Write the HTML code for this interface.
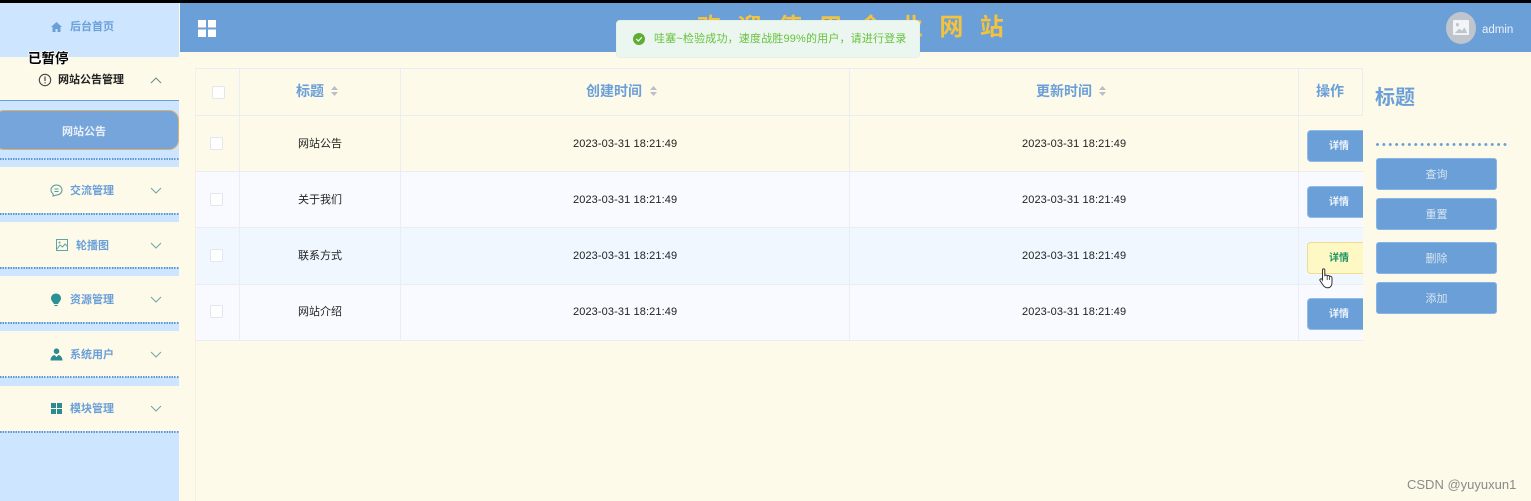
<!DOCTYPE html>
<html lang="zh-CN">
<head>
<meta charset="utf-8">
<title>网站公告</title>
<style>
html,body{margin:0;padding:0;width:1531px;height:501px;overflow:hidden;background:#fefaea;}
body{position:relative;font-family:"Liberation Sans","Noto Sans CJK SC",sans-serif;filter:blur(.3px);}
.a{position:absolute;}
.t{position:absolute;white-space:nowrap;line-height:1;}
.bar{position:absolute;left:0;width:179px;background:#fefaea;}
.dots{position:absolute;left:0;width:179px;height:2px;background:repeating-linear-gradient(90deg,#5f97d4 0,#5f97d4 1.500px,transparent 1.500px,transparent 2.600px);}
.mt{position:absolute;font-size:11px;font-weight:bold;color:#6a9fd8;white-space:nowrap;line-height:1;}
.ch{position:absolute;left:150px;width:12px;height:8px;}
.row{position:absolute;left:196px;width:1167px;border-bottom:1px solid #e9eef5;box-sizing:border-box;}
.v{position:absolute;width:1px;background:#e9eef5;}
.cb{position:absolute;width:11px;height:11px;background:#fff;border:1px solid #e3e6ee;border-radius:2px;}
.cell{position:absolute;font-size:11px;color:#222;white-space:nowrap;line-height:1;text-align:center;}
.d{letter-spacing:.11px;}
.th{position:absolute;font-size:14px;font-weight:bold;color:#6a9fd8;white-space:nowrap;line-height:1;}
.sort{position:absolute;width:7px;height:10px;}
.dbtn{position:absolute;left:1307px;width:56px;height:32px;background:#6a9fd8;border:1px solid #8fbbe8;border-right:0;border-radius:4px 0 0 4px;box-sizing:border-box;color:#eef4fb;font-size:10px;font-weight:bold;line-height:32px;text-indent:21px;}
.sbtn{position:absolute;left:1376px;width:121px;height:32px;background:#6a9fd8;border:1px solid #86b4e6;border-radius:3px;box-sizing:border-box;color:#d9e6ee;font-size:11px;line-height:32px;text-align:center;}
</style>
</head>
<body>
<div class="a" style="left:0;top:0;width:1531px;height:3px;background:#000;z-index:9"></div>

<!-- sidebar -->
<div class="a" style="left:0;top:3px;width:179px;height:498px;background:#cde5ff"></div>
<svg class="a" style="left:51px;top:22px" width="11" height="10" viewBox="0 0 11 10"><path d="M5.500 0L11 5H9.500V10H6.500V7H4.500V10H1.500V5H0Z" fill="#6a9fd8"/></svg>
<div class="mt" style="left:70px;top:22px">后台首页</div>

<div class="a" style="left:0;top:57px;width:179px;height:44px;background:#fefaea;border-bottom:1px solid #6a9fd8;box-sizing:border-box"></div>
<svg class="a" style="left:38px;top:73px" width="14" height="14" viewBox="0 0 14 14"><circle cx="7" cy="7" r="5.700" fill="none" stroke="#444" stroke-width="1.100"/><path d="M7 3.500V8M7 9.300V10.500" stroke="#444" stroke-width="1.200"/></svg>
<div class="mt" style="left:58px;top:75px;color:#222">网站公告管理</div>
<svg class="ch" style="top:76px" viewBox="0 0 12 8"><path d="M1 7L6 2L11 7" fill="none" stroke="#6b8a8a" stroke-width="1"/></svg>

<div class="a" style="left:-6px;top:110px;width:185px;height:40px;background:#76a5db;border:1px solid #dcaf6c;border-radius:10px;box-sizing:border-box"></div>
<div class="mt" style="left:62px;top:127px;color:#e8f0fa">网站公告</div>
<div class="dots" style="top:158px"></div>

<div class="bar" style="top:167px;height:46px"></div>
<div class="dots" style="top:213px"></div>
<svg class="a" style="left:50px;top:184px" width="13" height="13" viewBox="0 0 13 13"><path d="M6.500 1C9.700 1 12 3.200 12 6C12 8.800 9.700 11 6.500 11L3 12L3.300 10C1.800 9 1 7.600 1 6C1 3.200 3.300 1 6.500 1Z" fill="none" stroke="#4f9c9c" stroke-width="1"/><path d="M4.500 5H8.500M4.500 7.500H8.500" stroke="#4f9c9c" stroke-width="1"/></svg>
<div class="mt" style="left:70px;top:186px">交流管理</div>
<svg class="ch" style="top:187px" viewBox="0 0 12 8"><path d="M1 1L6 6L11 1" fill="none" stroke="#6fa5a5" stroke-width="1"/></svg>

<div class="bar" style="top:222px;height:45px"></div>
<div class="dots" style="top:267px"></div>
<svg class="a" style="left:56px;top:239px" width="12" height="12" viewBox="0 0 12 12"><rect x=".5" y=".5" width="11" height="11" fill="none" stroke="#5fa5a5"/><path d="M1 10L4 6L6.500 8L9 5L11 7" fill="none" stroke="#5fa5a5"/><circle cx="3.500" cy="3.500" r="1" fill="#5fa5a5"/></svg>
<div class="mt" style="left:76px;top:241px">轮播图</div>
<svg class="ch" style="top:242px" viewBox="0 0 12 8"><path d="M1 1L6 6L11 1" fill="none" stroke="#6fa5a5" stroke-width="1"/></svg>

<div class="bar" style="top:276px;height:46px"></div>
<div class="dots" style="top:322px"></div>
<svg class="a" style="left:50px;top:293px" width="12" height="14" viewBox="0 0 12 14"><path d="M6 0.500C9 0.500 11 2.700 11 5.200C11 7.700 9 9 8 11H4C3 9 1 7.700 1 5.200C1 2.700 3 0.500 6 0.500Z" fill="#2c9196"/><path d="M4.500 12.500H7.500" stroke="#2c9196" stroke-width="1.200"/></svg>
<div class="mt" style="left:70px;top:295px">资源管理</div>
<svg class="ch" style="top:296px" viewBox="0 0 12 8"><path d="M1 1L6 6L11 1" fill="none" stroke="#6fa5a5" stroke-width="1"/></svg>

<div class="bar" style="top:331px;height:46px"></div>
<div class="dots" style="top:376px"></div>
<svg class="a" style="left:50px;top:348px" width="13" height="13" viewBox="0 0 13 13"><circle cx="6.500" cy="3.200" r="2.800" fill="#2c8a92"/><path d="M0.500 12.500C0.500 9 3 7.200 4.500 7L6.500 9L8.500 7C10 7.200 12.500 9 12.500 12.500Z" fill="#2c8a92"/></svg>
<div class="mt" style="left:70px;top:350px">系统用户</div>
<svg class="ch" style="top:351px" viewBox="0 0 12 8"><path d="M1 1L6 6L11 1" fill="none" stroke="#6fa5a5" stroke-width="1"/></svg>

<div class="bar" style="top:386px;height:45px"></div>
<div class="dots" style="top:431px"></div>
<svg class="a" style="left:51px;top:403px" width="11" height="11" viewBox="0 0 11 11"><path d="M0 0H5V5H0ZM6 0H11V5H6ZM0 6H5V11H0ZM6 6H11V11H6Z" fill="#2c8a92"/></svg>
<div class="mt" style="left:70px;top:404px">模块管理</div>
<svg class="ch" style="top:405px" viewBox="0 0 12 8"><path d="M1 1L6 6L11 1" fill="none" stroke="#6fa5a5" stroke-width="1"/></svg>

<div class="t" style="left:28px;top:52px;font-size:13.500px;color:#000;font-weight:bold;text-shadow:1px 0 0 #fff,-1px 0 0 #fff,0 1px 0 #fff,0 -1px 0 #fff;z-index:5">已暂停</div>

<!-- header -->
<div class="a" style="left:180px;top:3px;width:1351px;height:49px;background:#6a9fd8"></div>
<svg class="a" style="left:198px;top:20px" width="18" height="17" viewBox="0 0 18 17"><path d="M0 0H8V7.500H0ZM10 0H18V7.500H10ZM0 9.500H8V17H0ZM10 9.500H18V17H10Z" fill="#fff"/></svg>
<div class="t" style="left:697px;top:16px;font-size:24px;font-weight:bold;letter-spacing:16.400px;color:#f4c23c">欢迎使用企业网站</div>
<div class="a" style="left:1446px;top:12px;width:30px;height:32px;border-radius:50%;background:#c0c4cc"></div>
<svg class="a" style="left:1453px;top:20px" width="16" height="15" viewBox="0 0 18 16" preserveAspectRatio="none"><rect width="18" height="16" rx="1" fill="#f2f4f7"/><circle cx="5" cy="5" r="1.800" fill="#c0c4cc"/><path d="M2 14L7 9L10 11.500L13 8L16 14Z" fill="#c0c4cc"/></svg>
<div class="t" style="left:1482px;top:25px;font-size:11.500px;color:#eaf2fb">admin</div>

<!-- table -->
<div class="a" style="left:195px;top:68px;width:1168px;height:433px;border-left:1px solid #f1efe6;box-sizing:border-box"></div>
<div class="row" style="top:68px;height:48px;background:#fdfae9;border-top:1px solid #e9eef5"></div>
<div class="row" style="top:116px;height:56px;background:#fdfae9"></div>
<div class="row" style="top:172px;height:56px;background:#f8faff"></div>
<div class="row" style="top:228px;height:57px;background:#f0f7ff"></div>
<div class="row" style="top:285px;height:56px;background:#f8faff"></div>
<div class="v" style="left:239px;top:68px;height:272px"></div>
<div class="v" style="left:400px;top:68px;height:272px"></div>
<div class="v" style="left:849px;top:68px;height:272px"></div>
<div class="v" style="left:1298px;top:68px;height:272px"></div>
<div class="v" style="left:1362px;top:68px;height:48px"></div>

<div class="cb" style="left:212px;top:86px"></div>
<div class="th" style="left:296px;top:84px">标题</div>
<svg class="sort" style="left:331px;top:86px" viewBox="0 0 7 10"><path d="M3.500 0L7 4H0ZM3.500 10L0 6H7Z" fill="#b9bec8"/></svg>
<div class="th" style="left:586px;top:84px">创建时间</div>
<svg class="sort" style="left:650px;top:86px" viewBox="0 0 7 10"><path d="M3.500 0L7 4H0ZM3.500 10L0 6H7Z" fill="#b9bec8"/></svg>
<div class="th" style="left:1036px;top:84px">更新时间</div>
<svg class="sort" style="left:1099px;top:86px" viewBox="0 0 7 10"><path d="M3.500 0L7 4H0ZM3.500 10L0 6H7Z" fill="#b9bec8"/></svg>
<div class="th" style="left:1316px;top:84px">操作</div>

<div class="cb" style="left:210px;top:137px"></div>
<div class="cell" style="left:298px;top:139px">网站公告</div>
<div class="cell d" style="left:573px;top:139px">2023-03-31 18:21:49</div>
<div class="cell d" style="left:1022px;top:139px">2023-03-31 18:21:49</div>
<div class="dbtn" style="top:130px">详情</div>

<div class="cb" style="left:210px;top:193px"></div>
<div class="cell" style="left:298px;top:195px">关于我们</div>
<div class="cell d" style="left:573px;top:195px">2023-03-31 18:21:49</div>
<div class="cell d" style="left:1022px;top:195px">2023-03-31 18:21:49</div>
<div class="dbtn" style="top:186px">详情</div>

<div class="cb" style="left:210px;top:249px"></div>
<div class="cell" style="left:298px;top:251px">联系方式</div>
<div class="cell d" style="left:573px;top:251px">2023-03-31 18:21:49</div>
<div class="cell d" style="left:1022px;top:251px">2023-03-31 18:21:49</div>
<div class="dbtn" style="top:242px;background:#fdf8c4;border-color:#f0dc8c;color:#1f9463">详情</div>

<div class="cb" style="left:210px;top:305px"></div>
<div class="cell" style="left:298px;top:307px">网站介绍</div>
<div class="cell d" style="left:573px;top:307px">2023-03-31 18:21:49</div>
<div class="cell d" style="left:1022px;top:307px">2023-03-31 18:21:49</div>
<div class="dbtn" style="top:298px">详情</div>

<svg class="a" style="left:1319px;top:268px;z-index:6" width="15" height="21" viewBox="0 0 15 21"><path d="M3.500 2C3.500 0.500 5.800 0.500 5.800 2V7.500C6.500 6.800 8 7 8.200 7.800C9 7.200 10.300 7.500 10.500 8.400C11.500 8 13 8.500 13 10V14.500C13 17.500 11.500 19.800 8.500 19.800C6 19.800 5 18.500 4 17L1 12.500C0.300 11.300 2 10.200 3 11.200L3.500 12Z" fill="#fff" stroke="#333" stroke-width="1"/><path d="M8.200 8V12M10.500 8.500V12" stroke="#333" stroke-width=".8"/></svg>

<!-- right panel -->
<div class="t" style="left:1375px;top:88px;font-size:20px;font-weight:bold;color:#6a9fd8">标题</div>
<div class="a" style="left:1376px;top:143px;width:134px;height:3px;background:radial-gradient(circle at 1.500px 1.500px,#6a9fd8 1.300px,transparent 1.600px) 0 0/6.380px 3px repeat-x"></div>
<div class="sbtn" style="top:158px">查询</div>
<div class="sbtn" style="top:198px">重置</div>
<div class="sbtn" style="top:242px">删除</div>
<div class="sbtn" style="top:282px">添加</div>

<!-- toast -->
<div class="a" style="left:616px;top:20px;width:304px;height:38px;background:#ebf6f1;border:1px solid #e3f1e6;border-radius:4px;box-sizing:border-box;z-index:7"></div>
<svg class="a" style="left:633px;top:33px;z-index:8" width="12" height="12" viewBox="0 0 12 12"><circle cx="6" cy="6" r="6" fill="#5dae33"/><path d="M3.300 6L5.300 8L8.800 4.300" fill="none" stroke="#fff" stroke-width="1.200"/></svg>
<div class="t" style="left:654px;top:34px;font-size:11px;letter-spacing:.17px;color:#67c23a;z-index:8">哇塞~检验成功，速度战胜99%的用户，请进行登录</div>

<div class="t" style="left:1407px;top:478px;font-size:13px;color:#8a8a8a">CSDN @yuyuxun1</div>
</body>
</html>
